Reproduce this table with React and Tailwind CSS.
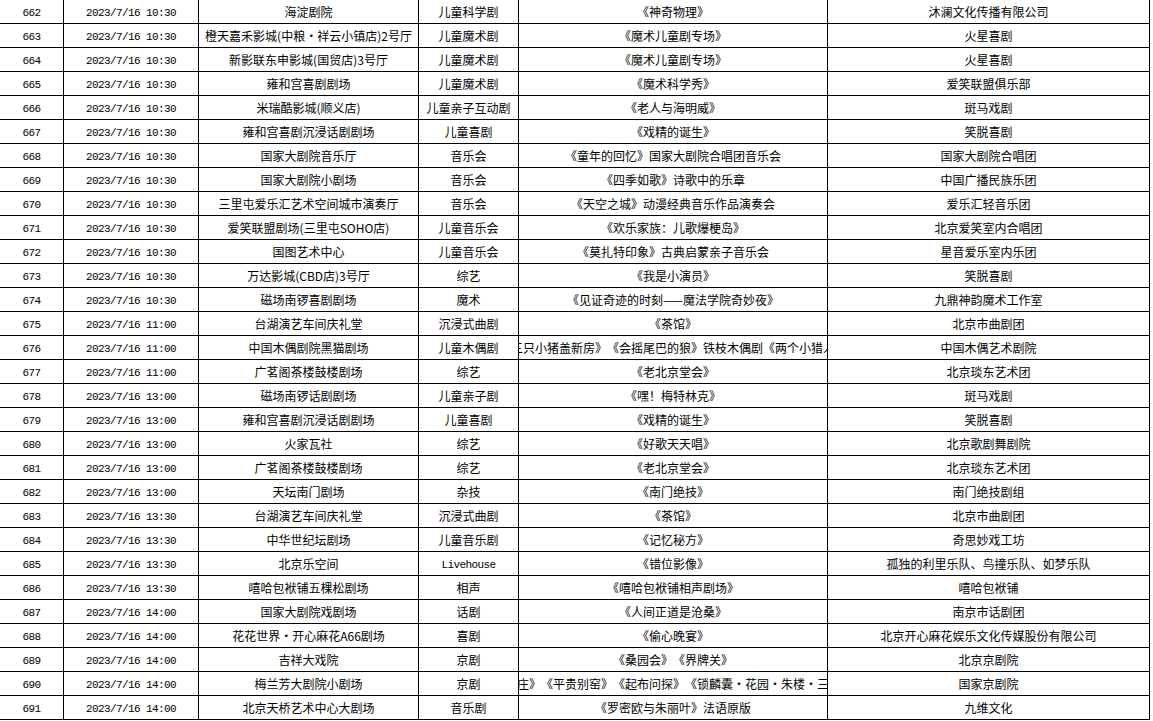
import React from 'react';

const rows = [
  ['662', '10:30', '海淀剧院', '儿童科学剧', '《神奇物理》', '沐澜文化传播有限公司'],
  ['663', '10:30', '橙天嘉禾影城(中粮・祥云小镇店)2号厅', '儿童魔术剧', '《魔术儿童剧专场》', '火星喜剧'],
  ['664', '10:30', '新影联东申影城(国贸店)3号厅', '儿童魔术剧', '《魔术儿童剧专场》', '火星喜剧'],
  ['665', '10:30', '雍和宫喜剧剧场', '儿童魔术剧', '《魔术科学秀》', '爱笑联盟俱乐部'],
  ['666', '10:30', '米瑞酷影城(顺义店)', '儿童亲子互动剧', '《老人与海明威》', '斑马戏剧'],
  ['667', '10:30', '雍和宫喜剧沉浸话剧剧场', '儿童喜剧', '《戏精的诞生》', '笑脱喜剧'],
  ['668', '10:30', '国家大剧院音乐厅', '音乐会', '《童年的回忆》国家大剧院合唱团音乐会', '国家大剧院合唱团'],
  ['669', '10:30', '国家大剧院小剧场', '音乐会', '《四季如歌》诗歌中的乐章', '中国广播民族乐团'],
  ['670', '10:30', '三里屯爱乐汇艺术空间城市演奏厅', '音乐会', '《天空之城》动漫经典音乐作品演奏会', '爱乐汇轻音乐团'],
  ['671', '10:30', '爱笑联盟剧场(三里屯SOHO店)', '儿童音乐会', '《欢乐家族：儿歌爆梗岛》', '北京爱笑室内合唱团'],
  ['672', '10:30', '国图艺术中心', '儿童音乐会', '《莫扎特印象》古典启蒙亲子音乐会', '星音爱乐室内乐团'],
  ['673', '10:30', '万达影城(CBD店)3号厅', '综艺', '《我是小演员》', '笑脱喜剧'],
  ['674', '10:30', '磁场南锣喜剧剧场', '魔术', '《见证奇迹的时刻——魔法学院奇妙夜》', '九鼎神韵魔术工作室'],
  ['675', '11:00', '台湖演艺车间庆礼堂', '沉浸式曲剧', '《茶馆》', '北京市曲剧团'],
  ['676', '11:00', '中国木偶剧院黑猫剧场', '儿童木偶剧', '《三只小猪盖新房》《会摇尾巴的狼》铁枝木偶剧《两个小猎人》', '中国木偶艺术剧院'],
  ['677', '11:00', '广茗阁茶楼鼓楼剧场', '综艺', '《老北京堂会》', '北京琰东艺术团'],
  ['678', '13:00', '磁场南锣话剧剧场', '儿童亲子剧', '《嘿！梅特林克》', '斑马戏剧'],
  ['679', '13:00', '雍和宫喜剧沉浸话剧剧场', '儿童喜剧', '《戏精的诞生》', '笑脱喜剧'],
  ['680', '13:00', '火家瓦社', '综艺', '《好歌天天唱》', '北京歌剧舞剧院'],
  ['681', '13:00', '广茗阁茶楼鼓楼剧场', '综艺', '《老北京堂会》', '北京琰东艺术团'],
  ['682', '13:00', '天坛南门剧场', '杂技', '《南门绝技》', '南门绝技剧组'],
  ['683', '13:30', '台湖演艺车间庆礼堂', '沉浸式曲剧', '《茶馆》', '北京市曲剧团'],
  ['684', '13:30', '中华世纪坛剧场', '儿童音乐剧', '《记忆秘方》', '奇思妙戏工坊'],
  ['685', '13:30', '北京乐空间', 'Livehouse', '《错位影像》', '孤独的利里乐队、鸟撞乐队、如梦乐队'],
  ['686', '13:30', '嘻哈包袱铺五棵松剧场', '相声', '《嘻哈包袱铺相声剧场》', '嘻哈包袱铺'],
  ['687', '14:00', '国家大剧院戏剧场', '话剧', '《人间正道是沧桑》', '南京市话剧团'],
  ['688', '14:00', '花花世界・开心麻花A66剧场', '喜剧', '《偷心晚宴》', '北京开心麻花娱乐文化传媒股份有限公司'],
  ['689', '14:00', '吉祥大戏院', '京剧', '《桑园会》《界牌关》', '北京京剧院'],
  ['690', '14:00', '梅兰芳大剧院小剧场', '京剧', '《赵家庄》《平贵别窑》《起布问探》《锁麟囊・花园・朱楼・三让椅》', '国家京剧院'],
  ['691', '14:00', '北京天桥艺术中心大剧场', '音乐剧', '《罗密欧与朱丽叶》法语原版', '九维文化'],
];

const cell = 'h-6 border-r border-b border-black flex items-center justify-center overflow-hidden whitespace-nowrap';
const mono = 'font-["Liberation_Mono",monospace] text-[11px] tracking-[-0.6px] pt-[3px]';
const cjk = 'font-["Noto_Sans_CJK_SC",sans-serif] text-[12px] [text-spacing-trim:space-all]';

const App = () => {
  return (
    <div className="w-[1153px] h-[721px] bg-white text-black overflow-hidden">
      <div className="grid grid-cols-[64px_135px_220px_100px_309px_322px] w-[1150px]">
        {rows.map((r) => (
          <React.Fragment key={r[0]}>
            <div className={`${cell} ${mono}`}>{r[0]}</div>
            <div className={`${cell} ${mono}`}>2023/7/16 {r[1]}</div>
            <div className={`${cell} ${cjk}`}><span className="shrink-0">{r[2]}</span></div>
            <div className={`${cell} ${r[3] === 'Livehouse' ? mono : cjk}`}><span className="shrink-0">{r[3]}</span></div>
            <div className={`${cell} ${cjk}`}><span className="shrink-0">{r[4]}</span></div>
            <div className={`${cell} ${cjk}`}><span className="shrink-0">{r[5]}</span></div>
          </React.Fragment>
        ))}
      </div>
    </div>
  );
};

export default App;
